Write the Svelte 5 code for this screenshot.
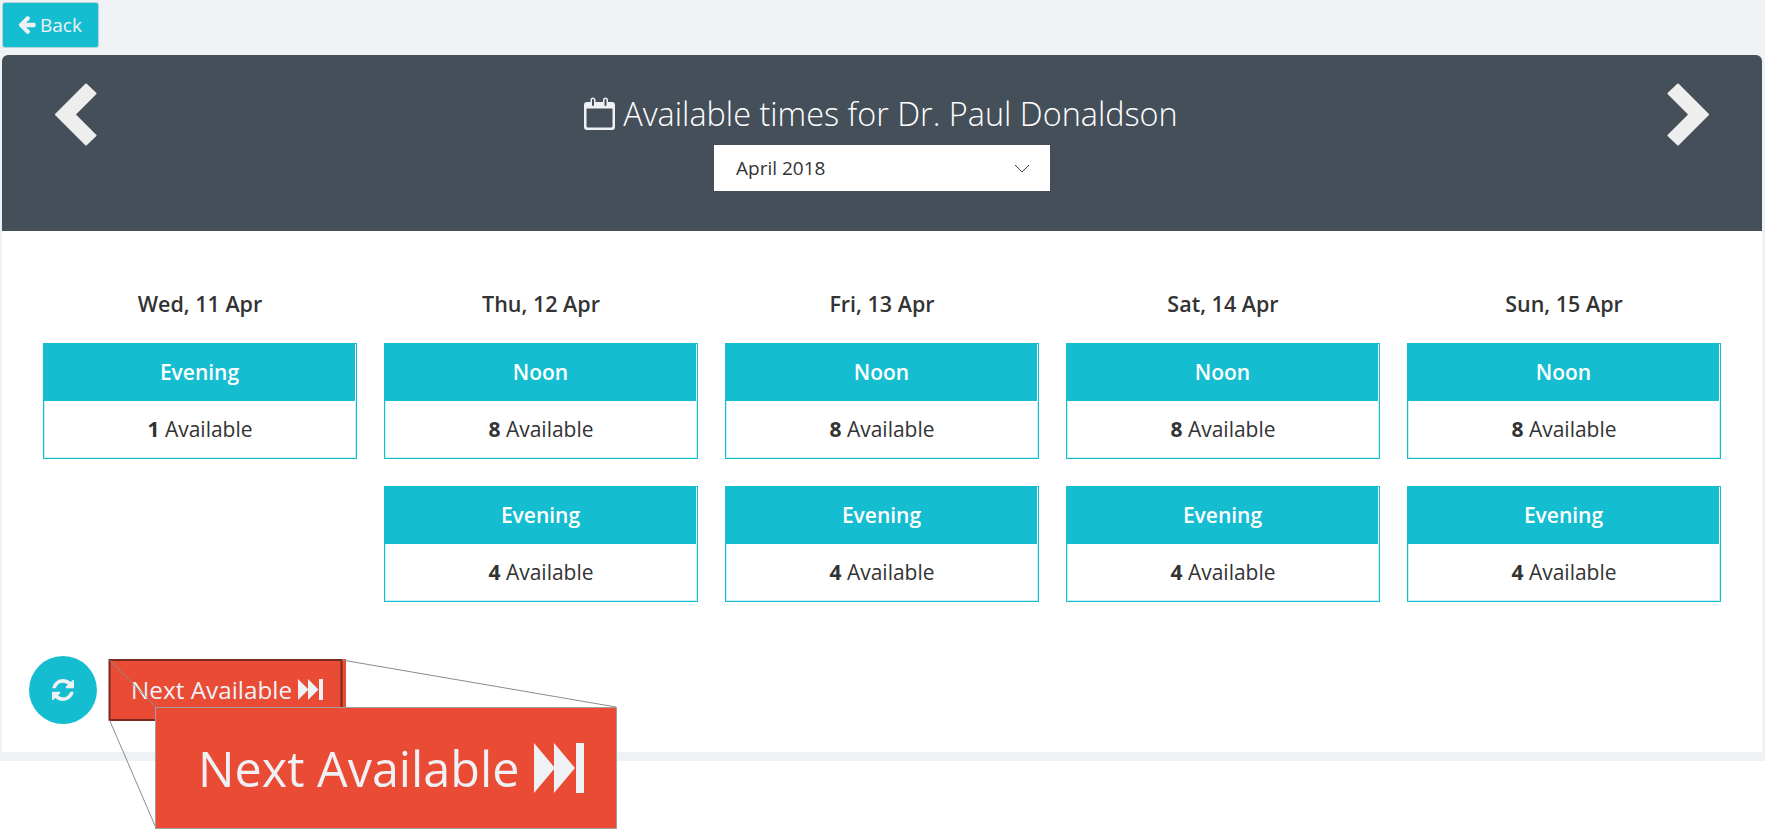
<script>
	const days = [
		{ label: 'Wed, 11 Apr', slots: [{ name: 'Evening', count: 1 }] },
		{ label: 'Thu, 12 Apr', slots: [{ name: 'Noon', count: 8 }, { name: 'Evening', count: 4 }] },
		{ label: 'Fri, 13 Apr', slots: [{ name: 'Noon', count: 8 }, { name: 'Evening', count: 4 }] },
		{ label: 'Sat, 14 Apr', slots: [{ name: 'Noon', count: 8 }, { name: 'Evening', count: 4 }] },
		{ label: 'Sun, 15 Apr', slots: [{ name: 'Noon', count: 8 }, { name: 'Evening', count: 4 }] }
	];
</script>

<div class="page">
	<div class="shell">
		<div class="topbar">
			<button class="back">
				<svg class="back-icon" viewBox="0 0 1472 1536" aria-hidden="true">
					<path d="M1408 800v128q0 53-32.500 90.500t-84.500 37.500h-704l293 294q38 36 38 90t-38 90l-75 76q-37 37-90 37-52 0-90-37l-651-652q-37-37-37-90 0-52 37-91l651-650q38-38 90-38 52 0 90 38l75 74q38 38 38 91t-38 91l-293 293h704q52 0 84.500 37.500t32.500 90.500z" transform="translate(32 -96)" />
				</svg>
				Back
			</button>
		</div>

		<div class="card">
			<header class="banner">
				<svg class="chev" viewBox="0 0 42 63" aria-hidden="true">
					<path d="M1 31.500 31 1.500 40.500 10.500 19.500 31.500 40.500 52.500 31 61.500Z" />
				</svg>
				<div class="banner-mid">
					<h1>
						<svg class="cal" viewBox="0 0 31 33" aria-hidden="true">
							<path class="cal-fill" d="M3 5h3.500V3a2.500 2.500 0 0 1 5 0v2h7.500V3a2.500 2.500 0 0 1 5 0v2H28a3 3 0 0 1 3 3v22a3 3 0 0 1-3 3H3a3 3 0 0 1-3-3V8a3 3 0 0 1 3-3ZM2.500 11.500V29a1.500 1.500 0 0 0 1.500 1.500h23a1.500 1.500 0 0 0 1.500-1.500V11.500ZM8 3v5a1 1 0 0 0 2 0V3a1 1 0 0 0-2 0ZM20.500 3v5a1 1 0 0 0 2 0V3a1 1 0 0 0-2 0Z" />
						</svg>
						Available times for Dr. Paul Donaldson
					</h1>
					<div class="month">
						<span>April 2018</span>
						<svg viewBox="0 0 16 9" aria-hidden="true"><path d="M1 1l7 7 7-7" /></svg>
					</div>
				</div>
				<svg class="chev" viewBox="0 0 42 63" aria-hidden="true">
					<path d="M41 31.500 11 1.500 1.500 10.500 22.500 31.500 1.500 52.500 11 61.500Z" />
				</svg>
			</header>

			<div class="days">
				{#each days as day}
					<section class="day">
						<h2>{day.label}</h2>
						{#each day.slots as slot}
							<div class="slot">
								<div class="slot-head">{slot.name}</div>
								<div class="slot-body"><b>{slot.count}</b> Available</div>
							</div>
						{/each}
					</section>
				{/each}
			</div>

			<div class="actions">
				<button class="refresh" aria-label="Refresh">
					<svg viewBox="0 0 1536 1536" aria-hidden="true">
						<path d="M1511 928q0 5-1 7-64 268-268 434.500t-478 166.500q-146 0-282.500-55t-243.500-157l-129 129q-19 19-45 19t-45-19-19-45v-448q0-26 19-45t45-19h448q26 0 45 19t19 45-19 45l-137 137q71 66 161 102t187 36q134 0 250-65t186-179q11-17 53-117 8-23 30-23h192q13 0 22.500 9.500t9.500 22.500zm25-800v448q0 26-19 45t-45 19h-448q-26 0-45-19t-19-45 19-45l138-138q-148-137-349-137-134 0-250 65t-186 179q-11 17-53 117-8 23-30 23h-199q-13 0-22.500-9.500t-9.500-22.500v-7q65-268 270-434.500t480-166.500q146 0 284 55.500t245 156.500l130-129q19-19 45-19t45 19 19 45z" />
					</svg>
				</button>
				<button class="next">
					Next Available
					<svg class="skip" viewBox="0 0 25 21" aria-hidden="true">
						<path d="M0 0 10.500 10.500 0 21ZM10 0 20.500 10.500 10 21ZM21 0h4v21h-4Z" />
					</svg>
				</button>
			</div>
		</div>
	</div>

	<!-- callout that magnifies the Next Available button -->
	<svg class="callout-lines" viewBox="0 0 520 175" aria-hidden="true">
		<rect x="1.500" y="1" width="232" height="60" />
		<path d="M1.500 1 48 48M234 1 508 48M1.500 61 48 169" />
	</svg>
	<div class="callout">
		Next Available
		<svg class="skip" viewBox="0 0 25 21" preserveAspectRatio="none" aria-hidden="true">
			<path d="M0 0 10.500 10.500 0 21ZM10 0 20.500 10.500 10 21ZM21 0h4v21h-4Z" />
		</svg>
	</div>
</div>

<style>
	:global(body) {
		background: #fff;
	}

	.page {
		position: relative;
		height: 838px;
		font-family: 'Open Sans', 'Liberation Sans', sans-serif;
		color: #333;
	}

	.shell {
		height: 761px;
		background: #f0f1f5;
	}

	button {
		font-family: inherit;
		cursor: pointer;
	}

	.topbar {
		height: 52px;
		padding: 2px 0 0 2px;
		box-sizing: border-box;
	}

	.back {
		display: flex;
		align-items: center;
		justify-content: center;
		gap: 4px;
		width: 97px;
		height: 46px;
		padding: 0;
		background: #15bdd1;
		border: 1px solid #b5d5da;
		border-radius: 3px;
		color: #f0f1f5;
		font-size: 19px;
	}

	.back-icon {
		width: 17px;
		height: 18px;
		fill: #f0f1f5;
	}

	.card {
		margin: 3px 3px 0 2px;
		height: 697px;
		background: #fff;
		border-radius: 6px 6px 0 0;
	}

	.banner {
		display: flex;
		justify-content: space-between;
		align-items: flex-start;
		box-sizing: border-box;
		height: 176px;
		padding: 28px 53px 0 53px;
		background: #454f5a;
		border-radius: 6px 6px 0 0;
	}

	.chev {
		width: 42px;
		height: 63px;
		fill: #eee;
		stroke: #eee;
		stroke-width: 2;
		stroke-linejoin: round;
	}

	.banner-mid {
		display: flex;
		flex-direction: column;
		align-items: center;
		gap: 10px;
		padding-top: 8px;
	}

	h1 {
		display: flex;
		align-items: center;
		gap: 8px;
		margin: 0;
		height: 44px;
		font-size: 32.400px;
		font-weight: 300;
		color: #fff;
		white-space: nowrap;
	}

	.cal {
		width: 31px;
		height: 33px;
		margin-left: -2px;
	}

	.cal-fill {
		fill: #f0f1f5;
		fill-rule: evenodd;
	}

	.month {
		display: flex;
		align-items: center;
		justify-content: space-between;
		box-sizing: border-box;
		width: 336px;
		height: 46px;
		padding: 0 20px 0 22px;
		background: #fff;
		font-size: 19px;
	}

	.month svg {
		width: 16px;
		height: 9px;
		fill: none;
		stroke: #444;
		stroke-width: 1;
	}

	.days {
		display: grid;
		grid-template-columns: repeat(5, 314px);
		gap: 27px;
		padding: 55px 0 0 41px;
		height: 425px;
		box-sizing: border-box;
	}

	.day {
		display: flex;
		flex-direction: column;
		gap: 27px;
	}

	h2 {
		margin: 0;
		height: 30px;
		line-height: 36px;
		text-align: center;
		font-size: 21.500px;
		font-weight: 600;
	}

	.slot {
		border: 1px solid #15bdd1;
		height: 116px;
		box-sizing: border-box;
		display: flex;
		flex-direction: column;
	}

	.slot-head {
		height: 57px;
		line-height: 57px;
		margin-right: 1px;
		background: #15bdd1;
		color: #fff;
		text-align: center;
		font-size: 21px;
		font-weight: 600;
	}

	.slot-body {
		flex: 1;
		line-height: 56px;
		text-align: center;
		font-size: 21px;
		box-shadow: inset 1px 0 #c8eff4, inset -1px 0 #c8eff4, inset 0 -1px #c8eff4;
	}

	.slot-body b {
		font-weight: 700;
	}

	.actions {
		display: flex;
		align-items: center;
		gap: 12px;
		padding-left: 27px;
	}

	.refresh {
		display: flex;
		align-items: center;
		justify-content: center;
		width: 68px;
		height: 68px;
		padding: 0;
		border: 0;
		border-radius: 50%;
		background: #15bdd1;
	}

	.refresh svg {
		width: 22px;
		height: 22px;
		fill: #f0f1f5;
	}

	.next {
		display: flex;
		align-items: center;
		gap: 6px;
		width: 237px;
		height: 60px;
		margin-bottom: 2px;
		padding: 0 0 0 22px;
		background: #e94b35;
		border: 0;
		color: #f0f1f5;
		font-size: 24.300px;
	}

	.next .skip {
		width: 25px;
		height: 21px;
		fill: #f0f1f5;
	}

	.callout-lines {
		position: absolute;
		left: 108px;
		top: 659px;
		width: 520px;
		height: 175px;
		overflow: visible;
		fill: none;
		pointer-events: none;
	}

	.callout-lines rect {
		stroke: #7a2a20;
		stroke-width: 2;
	}

	.callout-lines path {
		stroke: #8c8c8c;
		stroke-width: 1;
	}

	.callout {
		position: absolute;
		left: 155px;
		top: 707px;
		display: flex;
		align-items: center;
		gap: 15px;
		box-sizing: border-box;
		width: 462px;
		height: 122px;
		padding-left: 42px;
		background: #e94b35;
		border: 1px solid #a0a0a0;
		color: #f0f1f5;
		font-size: 48.500px;
		filter: blur(0.4px);
	}

	.callout .skip {
		width: 50px;
		height: 50px;
		fill: #f0f1f5;
	}
</style>
